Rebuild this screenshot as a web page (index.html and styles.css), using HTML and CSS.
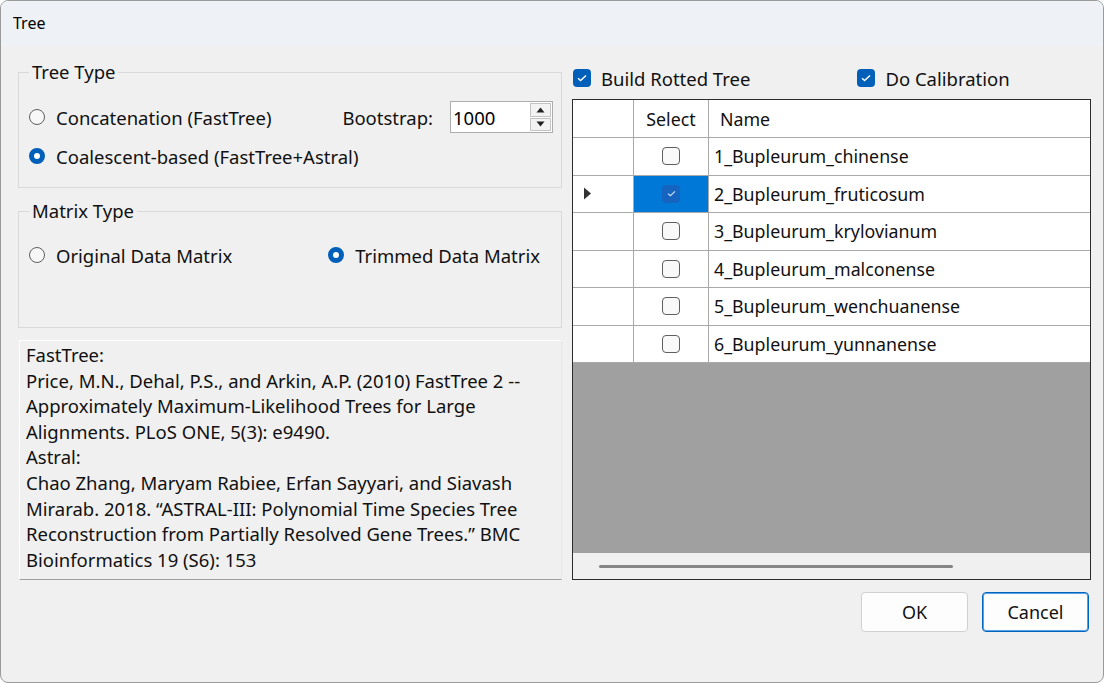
FILE: index.html
```html
<!DOCTYPE html>
<html>
<head>
<meta charset="utf-8">
<link rel="stylesheet" href="styles.css">
</head>
<body>
<div class="window">
  <div class="titlebar">Tree</div>
  <div class="main">
    <div class="left">
      <fieldset class="group tree-group">
        <legend>Tree Type</legend>
        <div class="row row-first">
          <label class="radio"><span class="dot"></span>Concatenation (FastTree)</label>
          <div class="boot">
            <span class="boot-label">Bootstrap:</span>
            <div class="spin">
              <span class="spin-val">1000</span>
              <div class="spin-btns">
                <span class="spin-btn"><svg width="9" height="6" viewBox="0 0 9 6"><path d="M4.5 0.5 L8.5 5.5 L0.5 5.5 Z" fill="#222"/></svg></span>
                <span class="spin-btn"><svg width="9" height="6" viewBox="0 0 9 6"><path d="M0.5 0.5 L8.5 0.5 L4.5 5.5 Z" fill="#222"/></svg></span>
              </div>
            </div>
          </div>
        </div>
        <div class="row row-second">
          <label class="radio"><span class="dot on"></span>Coalescent-based (FastTree+Astral)</label>
        </div>
      </fieldset>
      <fieldset class="group matrix-group">
        <legend>Matrix Type</legend>
        <div class="row matrix-row">
          <label class="radio"><span class="dot"></span>Original Data Matrix</label>
          <label class="radio trimmed"><span class="dot on"></span>Trimmed Data Matrix</label>
        </div>
      </fieldset>
      <div class="refs">
        <div>FastTree:</div>
        <div>Price, M.N., Dehal, P.S., and Arkin, A.P. (2010) FastTree 2 --</div>
        <div>Approximately Maximum-Likelihood Trees for Large</div>
        <div>Alignments. PLoS ONE, 5(3): e9490.</div>
        <div>Astral:</div>
        <div>Chao Zhang, Maryam Rabiee, Erfan Sayyari, and Siavash</div>
        <div>Mirarab. 2018. “ASTRAL-III: Polynomial Time Species Tree</div>
        <div>Reconstruction from Partially Resolved Gene Trees.” BMC</div>
        <div>Bioinformatics 19 (S6): 153</div>
      </div>
    </div>
    <div class="right">
      <div class="checks">
        <label class="check"><span class="box"><svg width="12" height="10" viewBox="0 0 12 10"><path d="M2 5.2 L4.6 7.6 L10 2.4" fill="none" stroke="#fff" stroke-width="1.4"/></svg></span>Build Rotted Tree</label>
        <label class="check calib"><span class="box"><svg width="12" height="10" viewBox="0 0 12 10"><path d="M2 5.2 L4.6 7.6 L10 2.4" fill="none" stroke="#fff" stroke-width="1.4"/></svg></span>Do Calibration</label>
      </div>
      <div class="grid">
        <div class="grow header">
          <div class="c-hdr"></div>
          <div class="c-sel">Select</div>
          <div class="c-name hname">Name</div>
        </div>
        <div class="grow">
          <div class="c-hdr"></div>
          <div class="c-sel"><span class="cb"></span></div>
          <div class="c-name">1_Bupleurum_chinense</div>
        </div>
        <div class="grow">
          <div class="c-hdr"><svg width="9" height="13" viewBox="0 0 9 13"><path d="M1 0.5 L8 6.5 L1 12.5 Z" fill="#333"/></svg></div>
          <div class="c-sel selected"><span class="cb checked"><svg width="11" height="9" viewBox="0 0 11 9"><path d="M2 4.6 L4.4 6.8 L9 2.4" fill="none" stroke="#cfe0f5" stroke-width="1.2"/></svg></span></div>
          <div class="c-name">2_Bupleurum_fruticosum</div>
        </div>
        <div class="grow">
          <div class="c-hdr"></div>
          <div class="c-sel"><span class="cb"></span></div>
          <div class="c-name">3_Bupleurum_krylovianum</div>
        </div>
        <div class="grow">
          <div class="c-hdr"></div>
          <div class="c-sel"><span class="cb"></span></div>
          <div class="c-name">4_Bupleurum_malconense</div>
        </div>
        <div class="grow">
          <div class="c-hdr"></div>
          <div class="c-sel"><span class="cb"></span></div>
          <div class="c-name">5_Bupleurum_wenchuanense</div>
        </div>
        <div class="grow">
          <div class="c-hdr"></div>
          <div class="c-sel"><span class="cb"></span></div>
          <div class="c-name">6_Bupleurum_yunnanense</div>
        </div>
        <div class="empty"></div>
        <div class="hscroll"><span class="thumb"></span></div>
      </div>
    </div>
  </div>
  <div class="buttons">
    <button class="btn">OK</button>
    <button class="btn default">Cancel</button>
  </div>
</div>
</body>
</html>
```
FILE: styles.css
```css
html, body {
  margin: 0;
  padding: 0;
  background: #ffffff;
}
body {
  font-family: "Noto Sans", "Liberation Sans", sans-serif;
  font-size: 18.5px;
  color: #111;
}
.window {
  width: 1104px;
  height: 683px;
  box-sizing: border-box;
  border: 1px solid #9a9a9a;
  border-radius: 8px;
  background: #f0f0f0;
  overflow: hidden;
  display: flex;
  flex-direction: column;
}
.titlebar {
  height: 45px;
  background: #eef2f7;
  padding-left: 12px;
  font-size: 16px;
  line-height: 44px;
  color: #000;
  flex: none;
}
.main {
  display: grid;
  grid-template-columns: 544px 519px;
  column-gap: 10px;
  padding: 15px 0 0 17px;
}
.left {
  display: flex;
  flex-direction: column;
}
.group {
  margin: 0;
  border: 1px solid #d9d9d9;
  padding: 0 8px 0 10px;
  min-width: 0;
}
.group legend {
  padding: 0 3px;
  margin-left: 0;
  line-height: 22px;
  color: #111;
}
.tree-group {
  padding-top: 18px;
  padding-bottom: 19px;
}
.matrix-group {
  margin-top: 12px;
  padding-top: 21px;
  padding-bottom: 60px;
}
.row {
  display: flex;
  align-items: center;
}
.row-first {
  height: 32px;
  justify-content: space-between;
}
.row-second {
  height: 24px;
  margin-top: 11px;
}
.matrix-row {
  height: 24px;
}
.radio {
  display: flex;
  align-items: center;
  gap: 11px;
  white-space: nowrap;
}
.trimmed {
  margin-left: 96px;
}
.dot {
  width: 16px;
  height: 16px;
  box-sizing: border-box;
  border-radius: 50%;
  border: 1px solid #5e5e5e;
  background: #f7f7f7;
  flex: none;
}
.dot.on {
  border: 5px solid #005fb8;
  background: #ffffff;
}
.boot {
  display: flex;
  align-items: center;
  gap: 17px;
}
.spin {
  width: 103px;
  height: 32px;
  box-sizing: border-box;
  border: 1px solid #adadad;
  background: #fff;
  display: flex;
  align-items: center;
  justify-content: space-between;
  padding: 0 1px 0 2px;
}
.spin-val {
  color: #000;
}
.spin-btns {
  display: flex;
  flex-direction: column;
  gap: 1px;
  width: 21px;
  height: 28px;
}
.spin-btn {
  flex: 1;
  border: 1px solid #c4c4c4;
  background: #f3f3f3;
  display: flex;
  align-items: center;
  justify-content: center;
}
.refs {
  margin-top: 12px;
  height: 240px;
  box-sizing: border-box;
  border-top: 1px solid #ffffff;
  border-left: 1px solid #ffffff;
  border-bottom: 1px solid #a0a0a0;
  border-right: 1px solid #e6e6e6;
  padding: 1px 0 0 6px;
  line-height: 25.6px;
  white-space: nowrap;
  color: #111;
  margin-left: 1px;
}
.right {
  display: flex;
  flex-direction: column;
}
.checks {
  display: flex;
  align-items: center;
  height: 24px;
  margin-top: 5px;
  padding-left: 1px;
}
.check {
  display: flex;
  align-items: center;
  gap: 10px;
  white-space: nowrap;
}
.calib {
  margin-left: 107px;
}
.box {
  width: 18px;
  height: 18px;
  border-radius: 4px;
  background: #005fb8;
  display: flex;
  align-items: center;
  justify-content: center;
}
.grid {
  margin-top: 9px;
  height: 481px;
  box-sizing: border-box;
  border: 1px solid #2c2c2c;
  display: flex;
  flex-direction: column;
  background: #fff;
  font-size: 17.8px;
}
.grow {
  display: flex;
  height: 37.5px;
  box-sizing: border-box;
  border-bottom: 1px solid #a9a9a9;
  background: #fff;
  flex: none;
}
.grow.header {
  height: 38px;
}
.c-hdr {
  width: 61px;
  box-sizing: border-box;
  border-right: 1px solid #a9a9a9;
  display: flex;
  align-items: center;
  padding-left: 10px;
}
.c-sel {
  width: 75px;
  box-sizing: border-box;
  border-right: 1px solid #a9a9a9;
  display: flex;
  align-items: center;
  justify-content: center;
}
.c-sel.selected {
  background: #0078d7;
}
.c-name {
  flex: 1;
  display: flex;
  align-items: center;
  padding-left: 5px;
  white-space: nowrap;
}
.hname {
  padding-left: 11px;
}
.cb {
  width: 18px;
  height: 18px;
  box-sizing: border-box;
  border: 1px solid #5f5f5f;
  border-radius: 4px;
  background: #f9f9f9;
  display: flex;
  align-items: center;
  justify-content: center;
}
.cb.checked {
  border: none;
  background: #1565c0;
}
.empty {
  flex: 1;
  background: #a0a0a0;
}
.hscroll {
  height: 26px;
  background: #f0f0f0;
  display: flex;
  align-items: center;
  padding-left: 26px;
  flex: none;
}
.thumb {
  width: 354px;
  height: 3px;
  border-radius: 2px;
  background: #858585;
}
.buttons {
  display: flex;
  justify-content: flex-end;
  gap: 14px;
  padding: 12px 14px 0 0;
}
.btn {
  width: 107px;
  height: 40px;
  box-sizing: border-box;
  border: 1px solid #d0d0d0;
  border-radius: 4px;
  background: #fdfdfd;
  font-family: "Noto Sans", "Liberation Sans", sans-serif;
  font-size: 18px;
  color: #111;
  padding: 0;
}
.btn.default {
  border: 1px solid #0067c0;
  box-shadow: inset 0 0 0 1px #5aa0e0;
}
```
